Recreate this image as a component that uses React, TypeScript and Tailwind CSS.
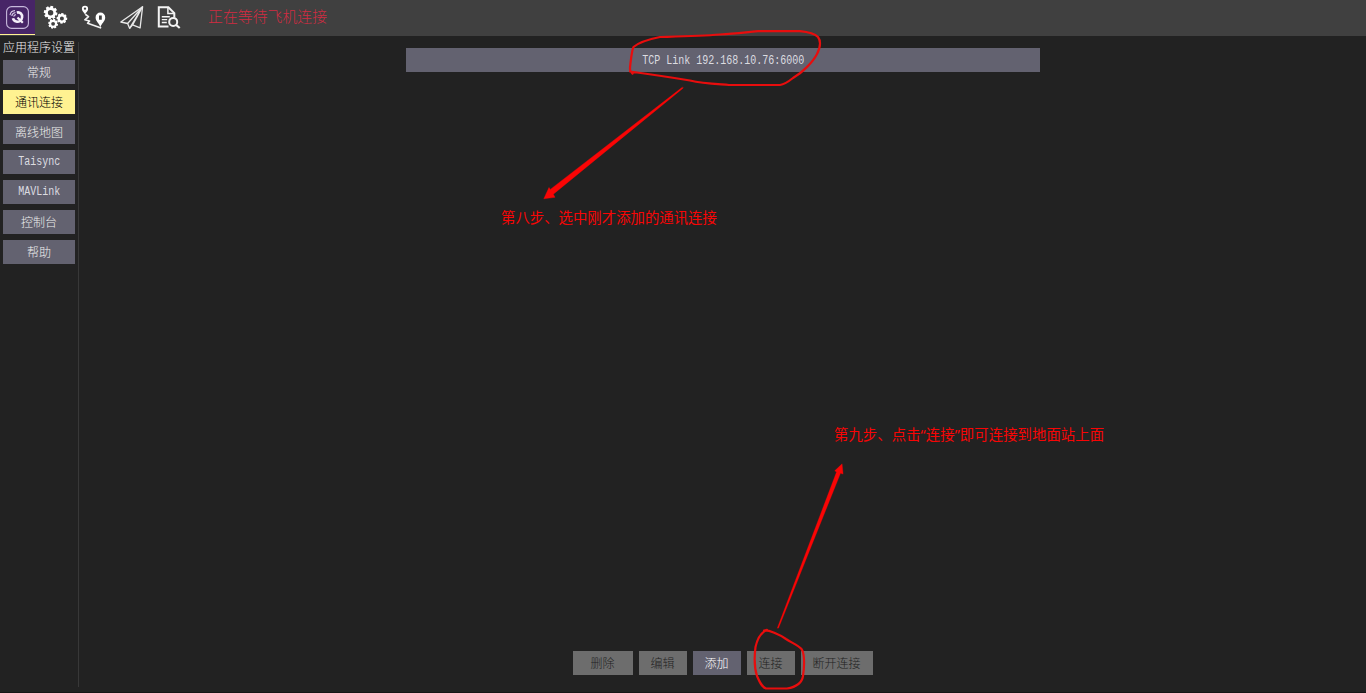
import React from "react";

const navItems = ["常规", "通讯连接", "离线地图", "Taisync", "MAVLink", "控制台", "帮助"];

const actions = [
  { label: "删除", box: "w-[60px]", on: false },
  { label: "编辑", box: "w-12", on: false },
  { label: "添加", box: "w-12", on: true },
  { label: "连接", box: "w-12", on: false },
  { label: "断开连接", box: "w-[72px]", on: false },
];

function MonoText({ children }: { children: string }) {
  return (
    <span className="ml-px mt-px inline-block origin-center scale-x-[.8333] whitespace-pre font-['Liberation_Mono',monospace] text-[12px] text-[#dcdce0]">
      {children}
    </span>
  );
}

function gearPath(cx: number, cy: number, outer: number, inner: number, hole: number, turn: number) {
  const pts: string[] = [];
  const teeth = 8;
  for (let i = 0; i < teeth; i++) {
    const a = turn + (i * 2 * Math.PI) / teeth;
    [
      [-0.29, inner],
      [-0.2, outer],
      [0.2, outer],
      [0.29, inner],
    ].forEach(([d, r]) => pts.push(`${(cx + r * Math.cos(a + d)).toFixed(2)} ${(cy + r * Math.sin(a + d)).toFixed(2)}`));
  }
  return `M${pts.join("L")}ZM${cx - hole} ${cy}a${hole} ${hole} 0 1 0 ${hole * 2} 0a${hole} ${hole} 0 1 0 ${-hole * 2} 0Z`;
}

function LogoIcon() {
  return (
    <svg className="h-[35px] w-[35px]" viewBox="0 0 35 35" fill="none">
      <rect x="6.6" y="6.6" width="21.8" height="21.8" rx="5" stroke="#c7b9dc" strokeWidth="1.1" />
      <path d="M16.800 12.500c3.500-.8 5.700 1.800 5.300 4.900-.4 3.400-3.200 4.800-5.800 4.200-2-.5-3-1.800-3.300-3.300" stroke="#f3eff8" strokeWidth="2.600" />
      <path d="m17.500 17.500 5.300 5.300" stroke="#f3eff8" strokeWidth="2.200" />
      <path d="M10 15.200c.4-2.700 2.200-4.500 5-4.600M11.800 16c.3-2 1.600-3.300 3.600-3.500M13.700 16.600c.2-1.200 1-1.900 2.200-2" stroke="#d5c9e5" strokeWidth="1.1" />
    </svg>
  );
}

function GearsIcon() {
  return (
    <svg className="h-9 w-[38px]" viewBox="0 0 38 36" fill="#fff" fillRule="evenodd">
      <path d={gearPath(15.6, 12.7, 6.9, 5.4, 2.7, 0.2)} />
      <path d={gearPath(26.9, 18.4, 5.4, 4.4, 2, 0.1)} />
      <path d={gearPath(18.1, 23.8, 5, 4, 1.9, 0.25)} />
    </svg>
  );
}

function RouteIcon() {
  return (
    <svg className="h-9 w-[38px]" viewBox="0 0 38 36" fill="none">
      <path fillRule="evenodd" fill="#fff" d="M12 5.800a3.100 3.100 0 0 0-3.100 3.200c0 2.100 2.100 3.500 3.100 5.400 1-1.900 3.100-3.300 3.100-5.400a3.100 3.100 0 0 0-3.100-3.200Zm0 1.600a1.200 1.200 0 1 1 0 2.400 1.200 1.200 0 0 1 0-2.400Z" />
      <path d="m12.300 14.300 3.200 2.300-3.600 3.200 4.600 1.200-1.900 2.200L28.200 28" stroke="#f2f2f2" strokeWidth="1.700" strokeLinejoin="round" />
      <path fillRule="evenodd" fill="#fff" d="M27.400 12.600a4.800 4.800 0 0 0-4.800 5c0 4 3.800 5.800 4.800 9.800 1-4 4.800-5.800 4.800-9.800a4.800 4.800 0 0 0-4.800-5Zm-1.400 3h2.800v4.200H26Z" />
    </svg>
  );
}

function PlaneIcon() {
  return (
    <svg className="h-9 w-[38px]" viewBox="0 0 38 36" fill="none" stroke="#e8e8e8" strokeWidth="1.3" strokeLinejoin="round">
      <path d="M31.600 6.700 9.800 22l6.800 1.500 2 4.800 3-3.400 7.500 3Z" />
      <path d="M31.600 6.700 16.600 23.500M31.600 6.700 18.600 28.300M31.600 6.700 21.600 24.900" />
    </svg>
  );
}

function AnalyzeIcon() {
  return (
    <svg className="h-9 w-[38px]" viewBox="-1 0 38 36" fill="none" stroke="#f4f4f4">
      <path d="M18.500 26.500H8.800v-19.200h9.600l5.900 5.800v4.400" strokeWidth="2" />
      <path d="M17.900 7.500v6h6" strokeWidth="1.500" />
      <path d="M11.800 16.700h8M11.800 19.600h5.400M11.800 22.500h5" strokeWidth="1.400" />
      <circle cx="23.200" cy="21.900" r="4" strokeWidth="2" />
      <path d="m26.200 25 3.500 3" strokeWidth="2.200" />
    </svg>
  );
}

export default function App() {
  return (
    <div className="relative flex h-[693px] w-[1366px] flex-col overflow-hidden bg-[#222] font-['Noto_Sans_CJK_SC',sans-serif] text-[12px] font-light leading-none text-[#eee]">
      <header className="flex h-9 shrink-0 items-center bg-[#404040]">
        <div className="flex h-9 w-[35px] flex-col bg-[#472567]">
          <div className="h-[35px] border-b border-[#fff291]">
            <LogoIcon />
          </div>
          <div className="h-px bg-[#404040]" />
        </div>
        <GearsIcon />
        <RouteIcon />
        <PlaneIcon />
        <AnalyzeIcon />
        <span className="mb-[3px] ml-[21px] text-[14.9px] text-[#d02c42]">正在等待飞机连接</span>
      </header>

      <div className="flex min-h-0 flex-1">
        <aside className="flex w-[78px] shrink-0 flex-col pl-[3px] pt-[5px]">
          <h1 className="mb-[7px] text-[12px] font-light">应用程序设置</h1>
          <nav className="flex flex-col gap-1.5">
            {navItems.map((item, i) => (
              <button
                key={item}
                className={`flex h-6 w-[72px] items-center justify-center pb-px ${i === 1 ? "bg-[#fff291] text-black" : "bg-[#636270] text-[#eee]"}`}
              >
                {/^[A-Z]/.test(item) ? <MonoText>{item}</MonoText> : item}
              </button>
            ))}
          </nav>
        </aside>
        <div className="mb-1.5 mt-1.5 w-px bg-[#383838]" />

        <main className="flex flex-1 flex-col items-center justify-between pb-[18px] pt-3">
          <button className="flex h-6 w-[634px] items-center justify-center bg-[#636270]">
            <MonoText>TCP Link 192.168.10.76:6000</MonoText>
          </button>
          <div className="flex gap-1.5">
            {actions.map((action) => (
              <button
                key={action.label}
                className={`flex h-6 items-center justify-center pb-px ${action.box} ${action.on ? "bg-[#636270] text-white" : "bg-[#6d6d6d] text-[#222]"}`}
              >
                {action.label}
              </button>
            ))}
          </div>
        </main>
      </div>
      <div className="absolute inset-x-0 bottom-0 h-px bg-[#161616]" />

      <svg className="pointer-events-none absolute inset-0 h-[693px] w-[1366px]" viewBox="0 0 1366 693" fill="none" stroke="#e80d0d" strokeWidth="2.2" strokeLinecap="round" strokeLinejoin="round">
        <path d="M632.5 73.5C629 71 630 68 630.500 63C631.500 55 632 50 633.500 47C638 43 650 39 660 37C677 36.500 700 36 720 34.500C736 34 744 32.500 758 31.200H800C808 32 815 34 818 37C821 41 820 48 817 54C813 62 802 73 793 78C788 82 784 84.500 780 85H729C717 84 703 83.500 690 80.500C669 77 648 74 630 71.500" />
        <path d="M767 629.8C760 633 757 640 755.500 647C754 659 755 670 757 676C760 683 762 687 766 688.500H787C796 687 802 683 803 676C805 663 804 652 801.500 649C798 645 792 643 786 639C779 634 769 630 764 630.500" />
        <path d="M682.300 87.300 550.300 189.400 549 187.500 543.800 198.800 555 197.300 553.300 194.200 683 88.200Z" fill="#fa0505" stroke="#fa0505" strokeWidth=".4" />
        <path d="m777.300 628 59.200-156-1.800-1.200 7.400-7 1 10.300-2.600-.8L778.600 628Z" fill="#fa0505" stroke="#fa0505" strokeWidth=".3" />
      </svg>
      <p className="absolute left-[501px] top-[210px] whitespace-nowrap text-[14.4px] font-normal text-[#f80505]">第八步、选中刚才添加的通讯连接</p>
      <p className="absolute left-[834px] top-[428px] whitespace-nowrap font-['Noto_Sans','Noto_Sans_CJK_SC',sans-serif] text-[14.4px] font-normal tracking-[0.04px] text-[#f80505]">
        第九步、点击“连接”即可连接到地面站上面
      </p>
    </div>
  );
}
